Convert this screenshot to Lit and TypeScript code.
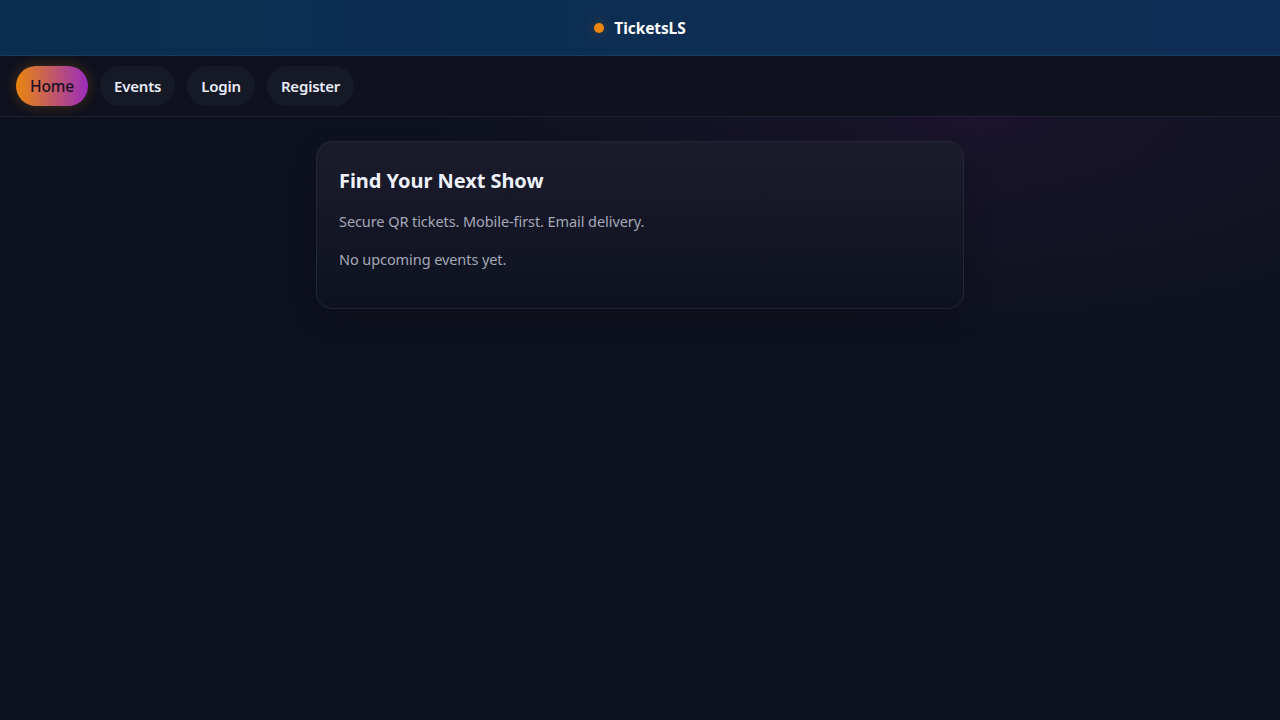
import { LitElement, html, css } from "lit";
import { customElement } from "lit/decorators.js";

@customElement("app-root")
export class AppRoot extends LitElement {
  static styles = css`
    :host {
      display: block;
      min-height: 720px;
      background:
        radial-gradient(540px 210px at 76% 116px, rgba(124, 36, 150, 0.11), transparent 100%),
        #0e121f;
      font-family: "Noto Sans", "Open Sans", sans-serif;
      color: #e8ecf6;
    }
    .top {
      height: 55px;
      display: flex;
      align-items: center;
      justify-content: center;
      gap: 10px;
      background: linear-gradient(90deg, #0b2e50, #0f2d56);
      border-bottom: 1px solid #123f61;
    }
    .dot {
      width: 10px;
      height: 10px;
      border-radius: 50%;
      background: #ee850c;
      box-shadow: 0 0 12px rgba(240, 138, 12, 0.3);
    }
    .brand {
      font-size: 15.5px;
      font-weight: 700;
      color: #fff;
      letter-spacing: -0.1px;
    }
    nav {
      height: 60px;
      display: flex;
      align-items: center;
      gap: 12px;
      padding: 0 16px;
      border-bottom: 1px solid #1f2130;
      background: #0f111e;
    }
    nav a {
      height: 40px;
      display: flex;
      align-items: center;
      padding: 0 14px;
      border-radius: 20px;
      background: #161926;
      color: #e8ecf6;
      font-size: 15px;
      font-weight: 600;
      letter-spacing: -0.2px;
    }
    nav a.active {
      background: linear-gradient(90deg, #ea860f, #9a2cbc);
      color: #1b1024;
      font-size: 15.5px;
      font-weight: 500;
      letter-spacing: -0.15px;
      box-shadow: 0 0 14px rgba(240, 138, 12, 0.25);
    }
    main {
      display: flex;
      justify-content: center;
      padding-top: 24px;
    }
    .card {
      width: 648px;
      box-sizing: border-box;
      height: 168px;
      padding: 23px 22px 22px;
      border: 1px solid #232636;
      border-radius: 16px;
      background: linear-gradient(180deg, #1b1b2c, #0e1220);
      box-shadow: 0 10px 30px rgba(0, 0, 0, 0.2);
    }
    h1 {
      margin: 0 0 13px;
      font-size: 20px;
      line-height: 32px;
      font-weight: 700;
      color: #eef1fa;
      letter-spacing: -0.05px;
    }
    p {
      margin: 0 0 16px;
      font-size: 14.5px;
      line-height: 22px;
      color: #a4a9b8;
      letter-spacing: -0.08px;
    }
  `;

  render() {
    return html`
      <header class="top"><span class="dot"></span><span class="brand">TicketsLS</span></header>
      <nav>
        <a class="active">Home</a><a>Events</a><a>Login</a><a>Register</a>
      </nav>
      <main>
        <section class="card">
          <h1>Find Your Next Show</h1>
          <p>Secure QR tickets. Mobile-first. Email delivery.</p>
          <p>No upcoming events yet.</p>
        </section>
      </main>
    `;
  }
}
